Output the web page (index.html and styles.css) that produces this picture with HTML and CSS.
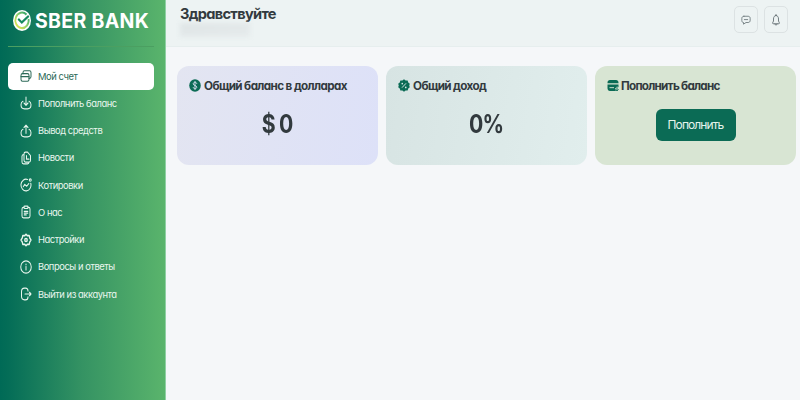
FILE: index.html
```html
<!DOCTYPE html>
<html lang="ru">
<head>
    <meta charset="UTF-8">
    <meta name="viewport" content="width=device-width, initial-scale=1.0">
    <title>Мой счет</title>
    <link rel="stylesheet" href="styles.css">
</head>
<body>
<div class="layout">
    <aside class="sidebar">
        <div class="logo">
            <svg class="logo-icon" viewBox="0 0 20 20" preserveAspectRatio="none">
                <defs>
                    <linearGradient id="ring" x1="0" y1="1" x2="1" y2="0">
                        <stop offset="0" stop-color="#f0e94a"/>
                        <stop offset="0.5" stop-color="#8fd06a"/>
                        <stop offset="1" stop-color="#1f9a6a"/>
                    </linearGradient>
                </defs>
                <circle cx="10" cy="10" r="10" fill="#ffffff"/>
                <path d="M15 4.400A7.400 7.400 0 1 0 17.300 8.600" fill="none" stroke="url(#ring)" stroke-width="2"/>
                <path d="M5.800 8.400l4 3.500L17.500 5.600" fill="none" stroke="#178a5f" stroke-width="2.200"/>
            </svg>
            <span class="logo-text">SBER BANK</span>
        </div>
        <nav class="menu">
            <a class="menu-item active">
                <svg class="icon" viewBox="0 0 24 24" preserveAspectRatio="none"><rect x="2" y="8" width="16" height="13" rx="3"/><path d="M2 13h16M6 8V6a3 3 0 0 1 3-3h10a3 3 0 0 1 3 3v7a3 3 0 0 1-3 3h-1"/></svg>
                <span>Мой счет</span>
            </a>
            <a class="menu-item">
                <svg class="icon" viewBox="0 0 24 24" preserveAspectRatio="none"><path d="M12 2v14M8 12l4 4 4-4M6 9c-3 1-4 3-4 6 0 5 3 7 7 7h6c4 0 7-2 7-7 0-3-1-5-4-6"/></svg>
                <span>Пополнить баланс</span>
            </a>
            <a class="menu-item">
                <svg class="icon" viewBox="0 0 24 24" preserveAspectRatio="none"><path d="M12 16V2M8 6l4-4 4 4M6 9c-3 1-4 3-4 6 0 5 3 7 7 7h6c4 0 7-2 7-7 0-3-1-5-4-6"/></svg>
                <span>Вывод средств</span>
            </a>
            <a class="menu-item">
                <svg class="icon" viewBox="0 0 24 24" preserveAspectRatio="none"><path d="M8 5a3 3 0 0 1 3-3h4l6 6v8a3 3 0 0 1-3 3h-7a3 3 0 0 1-3-3zM8 6C5 6 4 7 4 9v10c0 2 1 3 3 3h8c2 0 3-1 3-3M13 8v6h5"/></svg>
                <span>Новости</span>
            </a>
            <a class="menu-item">
                <svg class="icon" viewBox="0 0 24 24" preserveAspectRatio="none"><path d="M15 2.500A10 10 0 1 0 21.500 9M6.500 15l3-4 4 3 4-4.500"/><circle cx="20.500" cy="3.500" r="2"/></svg>
                <span>Котировки</span>
            </a>
            <a class="menu-item">
                <svg class="icon" viewBox="0 0 24 24" preserveAspectRatio="none"><path d="M8 4H7a3 3 0 0 0-3 3v12a3 3 0 0 0 3 3h10a3 3 0 0 0 3-3V7a3 3 0 0 0-3-3h-1M8.500 11h7M8.500 14h7M8.500 17h4"/><rect x="8" y="2" width="8" height="4" rx="1.500"/></svg>
                <span>О нас</span>
            </a>
            <a class="menu-item">
                <svg class="icon icon-bold" viewBox="0 0 24 24" preserveAspectRatio="none"><path d="M9.500 4.500L12 2l2.500 2.500L18.500 4.500l1 4L22 12l-2.500 3.500-1 4h-4L12 22l-2.500-2.500h-4l-1-4L2 12l2.500-3.500 1-4z"/><circle cx="12" cy="12" r="2.500"/></svg>
                <span>Настройки</span>
            </a>
            <a class="menu-item">
                <svg class="icon" viewBox="0 0 24 24" preserveAspectRatio="none"><circle cx="12" cy="12" r="10.500"/><path d="M12 11v6M12 7v1"/></svg>
                <span>Вопросы и ответы</span>
            </a>
            <a class="menu-item">
                <svg class="icon" viewBox="0 0 24 24" preserveAspectRatio="none"><path d="M16 7c0-3-2-5-5-5H9C5 2 3 4 3 8v8c0 4 2 6 6 6h2c3 0 5-2 5-5M10 12h12M19 9l3 3-3 3"/></svg>
                <span>Выйти из аккаунта</span>
            </a>
        </nav>
    </aside>
    <div class="content">
        <header class="header">
            <div class="greeting">
                <h1>Здравствуйте</h1>
                <div class="user-name"></div>
            </div>
            <div class="header-buttons">
                <button class="icon-button">
                    <svg class="icon" viewBox="0 0 24 24"><path d="M7 3h10c3 0 5 2 5 5v5c0 3-2 5-5 5h-5l-6 4v-4c-3 0-4-2-4-5V8c0-3 2-5 5-5zM8 11h8"/></svg>
                </button>
                <button class="icon-button">
                    <svg class="icon" viewBox="0 0 24 24" preserveAspectRatio="none"><path d="M12 3c-4 0-6 3-6 7v4l-2 3.500c-.5 1 0 2 1 2h14c1 0 1.500-1 1-2L18 14v-4c0-4-2-7-6-7zM12 1v2M9 20c0 3 6 3 6 0"/></svg>
                </button>
            </div>
        </header>
        <main class="cards">
            <section class="card card-balance">
                <h2>
                    <svg class="card-icon" viewBox="0 0 24 24" preserveAspectRatio="none"><circle cx="12" cy="12" r="11.500" fill="#0b6b55"/><path d="M15.500 9c0-4-7-4-7 0 0 3.500 7 2.500 7 6 0 4-7 4-7 0M12 4v16" fill="none" stroke="#dfe3f6" stroke-width="1.700"/></svg>
                    <span>Общий баланс в долларах</span>
                </h2>
                <p class="value">$ 0</p>
            </section>
            <section class="card card-income">
                <h2>
                    <svg class="card-icon" viewBox="0 0 24 24" preserveAspectRatio="none"><path d="M12 .5l3.300 2.200 4-.1 1.200 3.800 3.100 2.400L22.500 12l1.100 3.200-3.100 2.400-1.200 3.800-4-.1L12 23.500l-3.300-2.200-4 .1-1.200-3.800L.4 15.200 1.500 12 .4 8.800l3.100-2.400 1.200-3.800 4 .1z" fill="#0b6b55"/><path d="M8 16l8-8" stroke="#dce9e7" stroke-width="1.800"/><circle cx="8.500" cy="8.500" r="1.600" fill="#dce9e7"/><circle cx="15.500" cy="15.500" r="1.600" fill="#dce9e7"/></svg>
                    <span>Общий доход</span>
                </h2>
                <p class="value">0%</p>
            </section>
            <section class="card card-deposit">
                <h2>
                    <svg class="card-icon" viewBox="0 0 24 24" preserveAspectRatio="none"><path d="M1 7c0-3 2-5 5-5h12c3 0 5 2 5 5v1H1zM1 10h22v5l-3-1-4 4 2 4H6c-3 0-5-2-5-5z" fill="#0b6b55"/><path d="M5 16h9" stroke="#d8e5d3" stroke-width="1.800"/><path d="M20 15v7M17 19l3 3 3-3" fill="none" stroke="#0b6b55" stroke-width="1.800"/></svg>
                    <span>Пополнить баланс</span>
                </h2>
                <button class="deposit-button">Пополнить</button>
            </section>
        </main>
    </div>
</div>
</body>
</html>
```
FILE: styles.css
```css
*, *:before, *:after {
    box-sizing: border-box;
}

body {
    margin: 0;
    font-family: Inter, "Liberation Sans", sans-serif;
    font-feature-settings: "cv11";
    background-color: #f5f7f9;
    color: #323a3e;
}

button {
    font-family: inherit;
    font-feature-settings: inherit;
}

.layout {
    display: flex;
    height: 400px;
    overflow: hidden;
}

.sidebar {
    width: 166px;
    flex-shrink: 0;
    padding: 0 11px 0 8px;
    background: linear-gradient(90deg, #006a56 0%, #046d57 5%, #359363 50%, #5ab46c 100%);
    border-right: 1px solid #8fd0a4;
}

.logo {
    display: flex;
    align-items: center;
    height: 47px;
    padding: 0 0 5px 5px;
    border-bottom: 1px solid #4b9f61;
}

.logo-icon {
    width: 18px;
    height: 21px;
    flex-shrink: 0;
}

.logo-text {
    margin-left: 4px;
    font-size: 19.5px;
    font-weight: 650;
    letter-spacing: 0.3px;
    color: #ffffff;
    white-space: nowrap;
}

.menu {
    display: flex;
    flex-direction: column;
    padding-top: 15.5px;
}

.menu-item {
    display: flex;
    align-items: center;
    height: 27.25px;
    padding-left: 12px;
    gap: 6px;
    border-radius: 5px;
    font-size: 9.4px;
    letter-spacing: -0.45px;
    color: #e9f6ee;
    white-space: nowrap;
}

.menu-item.active {
    background-color: #ffffff;
    color: #2c6a58;
}

.icon {
    width: 12px;
    height: 14px;
    flex-shrink: 0;
    fill: none;
    stroke: currentColor;
    stroke-width: 2;
    stroke-linecap: round;
    stroke-linejoin: round;
}

.icon-bold {
    stroke-width: 2.6;
}

.content {
    flex: 1;
}

.header {
    display: flex;
    justify-content: space-between;
    height: 47px;
    padding: 6px 12px 0 14px;
    background-color: #edf3f3;
    border-bottom: 1px solid #e6eeee;
}

.header h1 {
    margin: -1px 0 0;
    font-size: 14.6px;
    line-height: 18px;
    font-weight: 650;
    letter-spacing: -0.7px;
}

.user-name {
    width: 70px;
    height: 14px;
    background: linear-gradient(170deg, #dfe5e6 0%, #e6ebec 100%);
    filter: blur(2px);
}

.header-buttons {
    display: flex;
    gap: 6px;
}

.icon-button {
    display: flex;
    align-items: center;
    justify-content: center;
    width: 24px;
    height: 27px;
    padding: 0;
    border: 1px solid #dce2e3;
    border-radius: 5px;
    background: none;
    color: #687377;
}

.icon-button .icon {
    width: 10px;
    height: 12px;
}

.cards {
    display: grid;
    grid-template-columns: repeat(3, 1fr);
    gap: 8px;
    padding: 18.5px 4px 0 11px;
}

.card {
    display: flex;
    flex-direction: column;
    align-items: center;
    height: 99px;
    padding: 12px;
    border-radius: 12px;
}

.card-balance {
    background: linear-gradient(100deg, #e3e5f1, #dde1f8);
}

.card-income {
    background: linear-gradient(100deg, #d7e4e3, #e1eeed);
}

.card-deposit {
    background-color: #d8e5d3;
}

.card h2 {
    display: flex;
    align-items: center;
    align-self: stretch;
    gap: 3px;
    height: 16px;
    margin: 0;
    font-size: 11.7px;
    font-weight: 650;
    letter-spacing: -0.62px;
    white-space: nowrap;
}

.card-icon {
    width: 12px;
    height: 13px;
    flex-shrink: 0;
}

.card-deposit h2 {
    gap: 2px;
    letter-spacing: -0.75px;
}

.value {
    margin: 14px 0 0;
    font-size: 25px;
    line-height: 32px;
    font-weight: 650;
    letter-spacing: -1px;
    transform: scaleX(0.85);
}

.deposit-button {
    width: 80px;
    height: 32px;
    margin-top: 15px;
    padding: 0;
    border: none;
    border-radius: 6px;
    background-color: #0b6b55;
    color: #e6f4ec;
    font-size: 12px;
    letter-spacing: -0.9px;
}
```
